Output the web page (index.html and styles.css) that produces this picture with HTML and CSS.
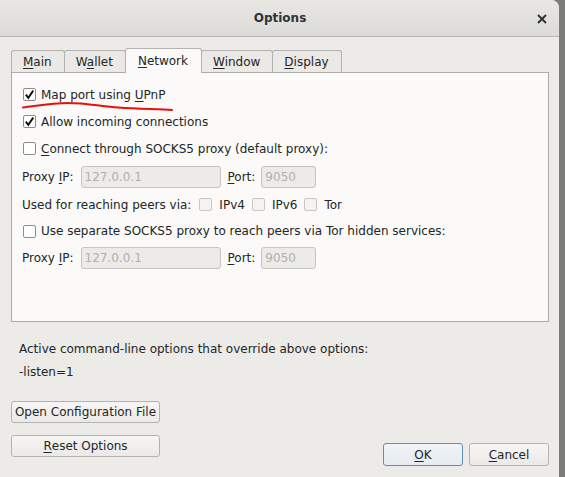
FILE: index.html
```html
<!DOCTYPE html>
<html>
<head>
<meta charset="utf-8">
<link rel="stylesheet" href="styles.css">
</head>
<body>
<div class="dialog">
  <div class="titlebar">
    <span></span>
    <span class="title">Options</span>
    <span class="close"><svg width="10" height="10" viewBox="0 0 10 10"><path d="M1 1 L9 9 M9 1 L1 9" stroke="#2e3436" stroke-width="2" fill="none"/></svg></span>
  </div>
  <div class="content">
    <div class="tabs">
      <div class="tab"><u>M</u>ain</div>
      <div class="tab">W<u>a</u>llet</div>
      <div class="tab selected"><u>N</u>etwork</div>
      <div class="tab"><u>W</u>indow</div>
      <div class="tab"><u>D</u>isplay</div>
    </div>
    <div class="pane">
      <div class="row r27">
        <span class="check on"><svg width="11" height="11" viewBox="0 0 11 11"><path d="M1.8 5.6 L4.3 8.8 L9.2 1.6" stroke="#111" stroke-width="1.9" fill="none"/></svg></span>
        <span>Map port using <u>U</u>PnP</span>
      </div>
      <div class="row r27">
        <span class="check on"><svg width="11" height="11" viewBox="0 0 11 11"><path d="M1.8 5.6 L4.3 8.8 L9.2 1.6" stroke="#111" stroke-width="1.9" fill="none"/></svg></span>
        <span>Allow incoming connections</span>
      </div>
      <div class="row r27">
        <span class="check"></span>
        <span><u>C</u>onnect through SOCKS5 proxy (default proxy):</span>
      </div>
      <div class="row r29 field-row">
        <span class="lbl">Proxy <u>I</u>P:</span>
        <span class="input ip">127.0.0.1</span>
        <span class="lbl port-lbl"><u>P</u>ort:</span>
        <span class="input port">9050</span>
      </div>
      <div class="row r27">
        <span class="lbl">Used for reaching peers via:</span>
        <span class="check dis first"></span><span class="opt">IPv4</span>
        <span class="check dis"></span><span class="opt">IPv6</span>
        <span class="check dis"></span><span class="opt">Tor</span>
      </div>
      <div class="row r26">
        <span class="check"></span>
        <span>Use separate SOCKS5 proxy to reach peers via Tor hidden services:</span>
      </div>
      <div class="row r28 field-row">
        <span class="lbl">Proxy <u>I</u>P:</span>
        <span class="input ip">127.0.0.1</span>
        <span class="lbl port-lbl"><u>P</u>ort:</span>
        <span class="input port">9050</span>
      </div>
    </div>
    <div class="info">
      <div>Active command-line options that override above options:</div>
      <div>-listen=1</div>
    </div>
    <div class="actions">
      <div class="left-buttons">
        <div class="btn wide">Open Configuration File</div>
        <div class="btn wide"><u>R</u>eset Options</div>
      </div>
      <div class="right-buttons">
        <div class="btn small default"><u>O</u>K</div>
        <div class="btn small"><u>C</u>ancel</div>
      </div>
    </div>
  </div>
  <svg class="scribble" width="200" height="20" viewBox="0 0 200 20">
    <path d="M23 107.5 C 36 106, 52 103, 68 103 C 85 103, 100 106, 118 107.5 C 140 109, 160 109, 172 110" transform="translate(0,-96)" stroke="#e8100c" stroke-width="2" fill="none" stroke-linecap="round"/>
  </svg>
</div>
</body>
</html>
```
FILE: styles.css
```css
html, body {
  margin: 0;
  padding: 0;
}
body {
  width: 565px;
  height: 477px;
  overflow: hidden;
  background: #7c7c7a;
  font-family: "DejaVu Sans", sans-serif;
  font-size: 12px;
  color: #222627;
}
u {
  text-decoration: underline;
  text-underline-offset: 2px;
  text-decoration-thickness: 1px;
}
.dialog {
  position: relative;
  width: 559px;
  height: 477px;
  background: #edebe8;
  border-top-right-radius: 8px;
  display: flex;
  flex-direction: column;
  overflow: hidden;
}
.titlebar {
  height: 36px;
  border-bottom: 1px solid #b9b7b3;
  background: linear-gradient(#e9e7e4, #dddbd7);
  display: grid;
  grid-template-columns: 1fr auto 1fr;
  align-items: center;
}
.title {
  font-weight: bold;
  font-size: 12px;
  color: #2e3436;
  padding-left: 1px;
}
.close {
  justify-self: end;
  margin-right: 12px;
  display: flex;
  margin-top: 1px;
}
.content {
  padding: 0 10px 0 11px;
  display: flex;
  flex-direction: column;
}
.tabs {
  display: flex;
  align-items: flex-end;
  margin-top: 11px;
  position: relative;
  z-index: 1;
}
.tab {
  height: 21px;
  line-height: 22px;
  border: 1px solid #b4b2ae;
  border-bottom: none;
  border-radius: 3px 3px 0 0;
  padding: 0 12px 0 11px;
  margin-right: -1px;
  background: #ebe9e6;
}
.tab.selected {
  box-sizing: border-box;
  height: 25px;
  padding-top: 1px;
  padding-right: 13px;
  padding-left: 12px;
  line-height: 22px;
  background: #fbfaf8;
  margin-bottom: -1px;
  position: relative;
  z-index: 2;
}
.pane {
  box-sizing: border-box;
  height: 250px;
  border: 1px solid #aeaca8;
  background: #fbfaf8;
  padding: 8px 0 0 11px;
  display: flex;
  flex-direction: column;
}
.row {
  display: flex;
  align-items: center;
  white-space: nowrap;
}
.r26 { height: 26px; }
.r27 { height: 27px; }
.r28 { height: 28px; }
.r29 { height: 29px; }
.check {
  box-sizing: border-box;
  width: 13px;
  height: 13px;
  border: 1px solid #8f8d89;
  border-radius: 2px;
  background: #ffffff;
  margin-right: 5px;
  display: flex;
  align-items: center;
  justify-content: center;
  flex: none;
}
.check.dis {
  border-color: #c9c7c3;
  background: #f4f3f1;
  margin-left: 7px;
  margin-right: 7px;
}
.check.dis.first {
  margin-left: 8px;
}
.lbl {
  margin-left: -1px;
}
.field-row .port-lbl {
  margin-left: 7px;
}
.input {
  box-sizing: border-box;
  height: 22px;
  line-height: 20px;
  border: 1px solid #c6c4c0;
  border-radius: 3px;
  background: #ecebe8;
  color: #b2b0ac;
  padding-left: 3px;
  margin-left: 7px;
}
.input.ip { width: 140px; }
.input.port { width: 55px; margin-left: 6px; }
.info {
  margin-top: 16px;
  padding-left: 8px;
  line-height: 23px;
}
.actions {
  margin-top: 17px;
  display: flex;
  justify-content: space-between;
  align-items: flex-end;
}
.left-buttons {
  display: flex;
  flex-direction: column;
  gap: 12px;
  margin-bottom: 9px;
}
.right-buttons {
  display: flex;
  gap: 6px;
}
.btn {
  box-sizing: border-box;
  border: 1px solid #b5b3af;
  border-radius: 3px;
  background: linear-gradient(#f7f6f4, #ebe9e6);
  display: flex;
  align-items: center;
  justify-content: center;
  white-space: nowrap;
}
.btn.wide {
  width: 149px;
  height: 22px;
}
.btn.small {
  width: 80px;
  height: 23px;
}
.btn.default {
  border-color: #5f8ebd;
  background: linear-gradient(#f1f4f7, #e6ebf0);
}
.scribble {
  position: absolute;
  left: 0;
  top: 96px;
  pointer-events: none;
}
```
